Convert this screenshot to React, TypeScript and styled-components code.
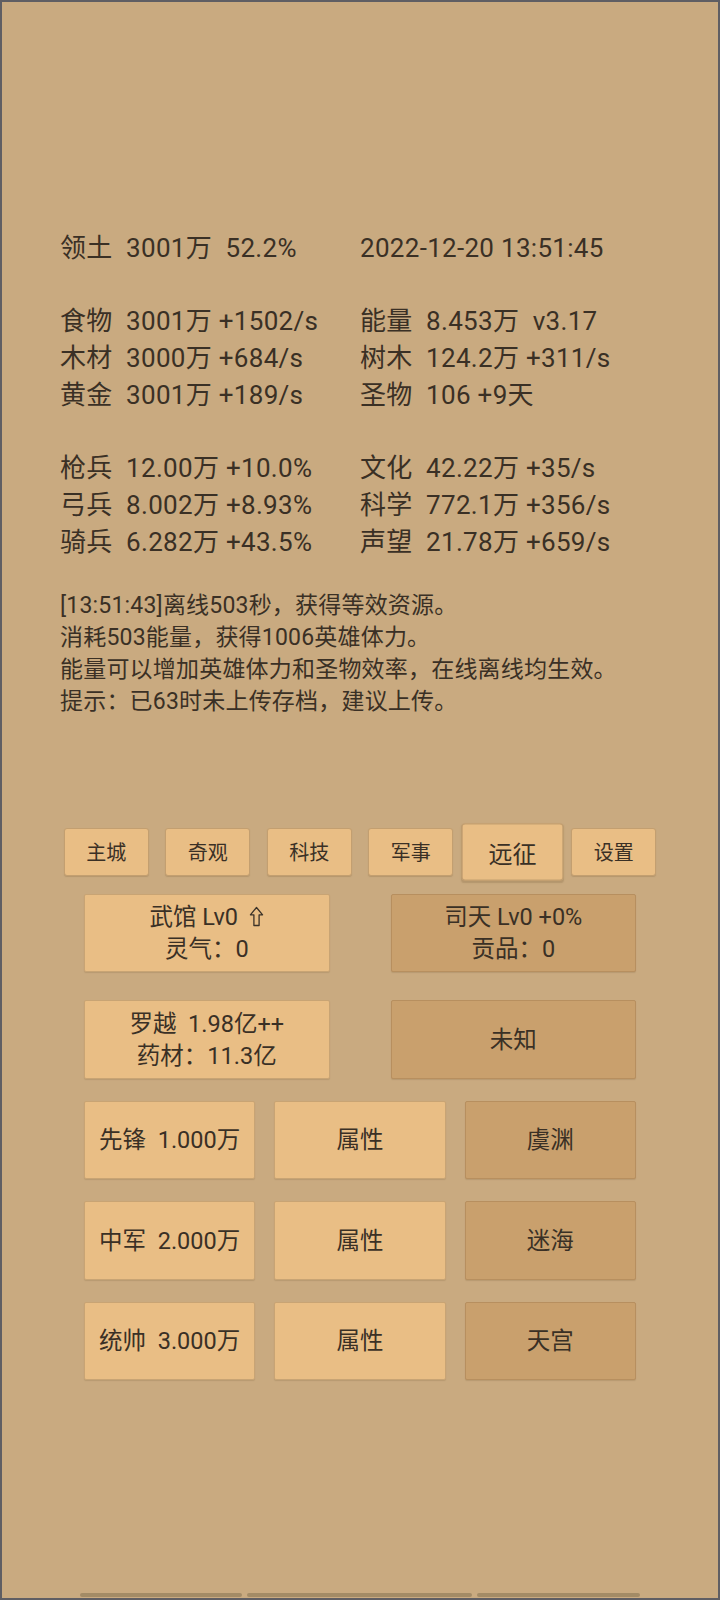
import styled, { createGlobalStyle } from 'styled-components';
import { FC } from 'react';

const GlobalStyle = createGlobalStyle`
	html, body {
		margin: 0;
		padding: 0;
		background: #c9aa80;
	}
	* {
		box-sizing: border-box;
	}
`;

type StatLine = [string, string] | null;

const STATS: StatLine[] = [
	['领土  3001万  52.2%', '2022-12-20 13:51:45'],
	null,
	['食物  3001万 +1502/s', '能量  8.453万  v3.17'],
	['木材  3000万 +684/s', '树木  124.2万 +311/s'],
	['黄金  3001万 +189/s', '圣物  106 +9天'],
	null,
	['枪兵  12.00万 +10.0%', '文化  42.22万 +35/s'],
	['弓兵  8.002万 +8.93%', '科学  772.1万 +356/s'],
	['骑兵  6.282万 +43.5%', '声望  21.78万 +659/s'],
];

const LOG = [
	'[13:51:43]离线503秒，获得等效资源。',
	'消耗503能量，获得1006英雄体力。',
	'能量可以增加英雄体力和圣物效率，在线离线均生效。',
	'提示：已63时未上传存档，建议上传。',
];

const TABS = ['主城', '奇观', '科技', '军事', '远征', '设置'];
const ACTIVE_TAB = '远征';

const TROOPS = [
	{ name: '先锋  1.000万', place: '虞渊' },
	{ name: '中军  2.000万', place: '迷海' },
	{ name: '统帅  3.000万', place: '天宫' },
];

const UpArrow: FC = () => (
	<ArrowIcon width="15" height="21" viewBox="0 0 15 21">
		<path d="M7.5 1.5 L13.6 8.8 H10.1 V19.5 H4.9 V8.8 H1.4 Z" fill="none" stroke="#3b3228" strokeWidth="1.3" strokeLinejoin="round" />
	</ArrowIcon>
);

const App: FC = () => {
	return (
		<Page>
			<GlobalStyle />
			<Stats>
				{STATS.map((row, i) =>
					row ? (
						<StatRow key={i}>
							<StatCell>{row[0]}</StatCell>
							<StatCell>{row[1]}</StatCell>
						</StatRow>
					) : (
						<BlankLine key={i} />
					)
				)}
			</Stats>

			<Log>
				{LOG.map((line) => (
					<LogLine key={line}>{line}</LogLine>
				))}
			</Log>

			<TabBar>
				{TABS.map((tab) => (
					<Tab key={tab} $active={tab === ACTIVE_TAB}>
						{tab}
					</Tab>
				))}
			</TabBar>

			<Board>
				<PairRow $loose>
					<Card>
						<CardLine>
							武馆 Lv0<UpArrow />
						</CardLine>
						<CardLine>灵气：0</CardLine>
					</Card>
					<Card $dark>
						<CardLine>司天 Lv0 +0%</CardLine>
						<CardLine>贡品：0</CardLine>
					</Card>
				</PairRow>
				<PairRow>
					<Card>
						<CardLine>罗越  1.98亿++</CardLine>
						<CardLine>药材：11.3亿</CardLine>
					</Card>
					<Card $dark>
						<CardLine>未知</CardLine>
					</Card>
				</PairRow>
				{TROOPS.map((troop) => (
					<TripleRow key={troop.place}>
						<Card>
							<CardLine>{troop.name}</CardLine>
						</Card>
						<Card>
							<CardLine>属性</CardLine>
						</Card>
						<Card $dark>
							<CardLine>{troop.place}</CardLine>
						</Card>
					</TripleRow>
				))}
			</Board>

			<Footer>
				<FooterBar $width={162} />
				<FooterBar $width={225} />
				<FooterBar $width={163} />
			</Footer>
		</Page>
	);
};

const Page = styled.div`
	width: 720px;
	height: 1600px;
	display: flex;
	flex-direction: column;
	border: 2px solid #5f5e63;
	background: #c9aa80;
	color: #3a3025;
	font-family: Roboto, 'Noto Sans CJK SC', sans-serif;
`;

const Stats = styled.div`
	padding: 227.5px 0 0 58px;
	font-size: 26px;
	line-height: 36.75px;
	letter-spacing: 0.3px;
`;

const StatRow = styled.div`
	display: grid;
	grid-template-columns: 300px auto;
`;

const StatCell = styled.div`
	white-space: pre;
`;

const BlankLine = styled.div`
	height: 36.75px;
`;

const Log = styled.div`
	margin-top: 29.5px;
	padding-left: 58px;
	font-size: 23px;
	line-height: 32px;
	letter-spacing: 0.2px;
`;

const LogLine = styled.div`
	white-space: pre;
`;

const TabBar = styled.div`
	margin-top: 110px;
	display: flex;
	justify-content: center;
	gap: 16.5px;
`;

const Tab = styled.div<{ $active?: boolean }>`
	width: 85px;
	height: 48px;
	display: flex;
	align-items: center;
	justify-content: center;
	font-size: 20px;
	background: #e9be85;
	border: 1px solid #c39f70;
	border-radius: 3px;
	box-shadow: 0 1px 1px rgba(120, 90, 50, 0.25);
	transform: ${(props) => (props.$active ? 'scale(1.2)' : 'none')};
`;

const Board = styled.div`
	width: 552px;
	margin: 18px auto 0;
	display: flex;
	flex-direction: column;
	gap: 22px;
`;

const PairRow = styled.div<{ $loose?: boolean }>`
	display: grid;
	grid-template-columns: 245.5px 245.5px;
	justify-content: space-between;
	margin-bottom: ${(props) => (props.$loose ? '6px' : '0')};
`;

const TripleRow = styled.div`
	display: grid;
	grid-template-columns: repeat(3, 1fr);
	gap: 19px;
`;

const Card = styled.div<{ $dark?: boolean }>`
	height: 78.5px;
	display: flex;
	flex-direction: column;
	align-items: center;
	justify-content: center;
	font-size: 23.5px;
	line-height: 32px;
	background: ${(props) => (props.$dark ? '#c9a06d' : '#e9be85')};
	border: 1px solid ${(props) => (props.$dark ? '#b78f5f' : '#c8a474')};
	border-radius: 2px;
	box-shadow: 0 1px 1px rgba(120, 90, 50, 0.2);
`;

const CardLine = styled.div`
	display: flex;
	align-items: center;
	white-space: pre;
`;

const ArrowIcon = styled.svg`
	margin-left: 11px;
	margin-top: -2px;
`;

const Footer = styled.div`
	margin-top: auto;
	display: flex;
	justify-content: center;
	gap: 5px;
	padding-bottom: 1px;
`;

const FooterBar = styled.div<{ $width: number }>`
	width: ${(props) => props.$width}px;
	height: 4px;
	border-radius: 2px;
	background: #a38b66;
`;

export default App;
